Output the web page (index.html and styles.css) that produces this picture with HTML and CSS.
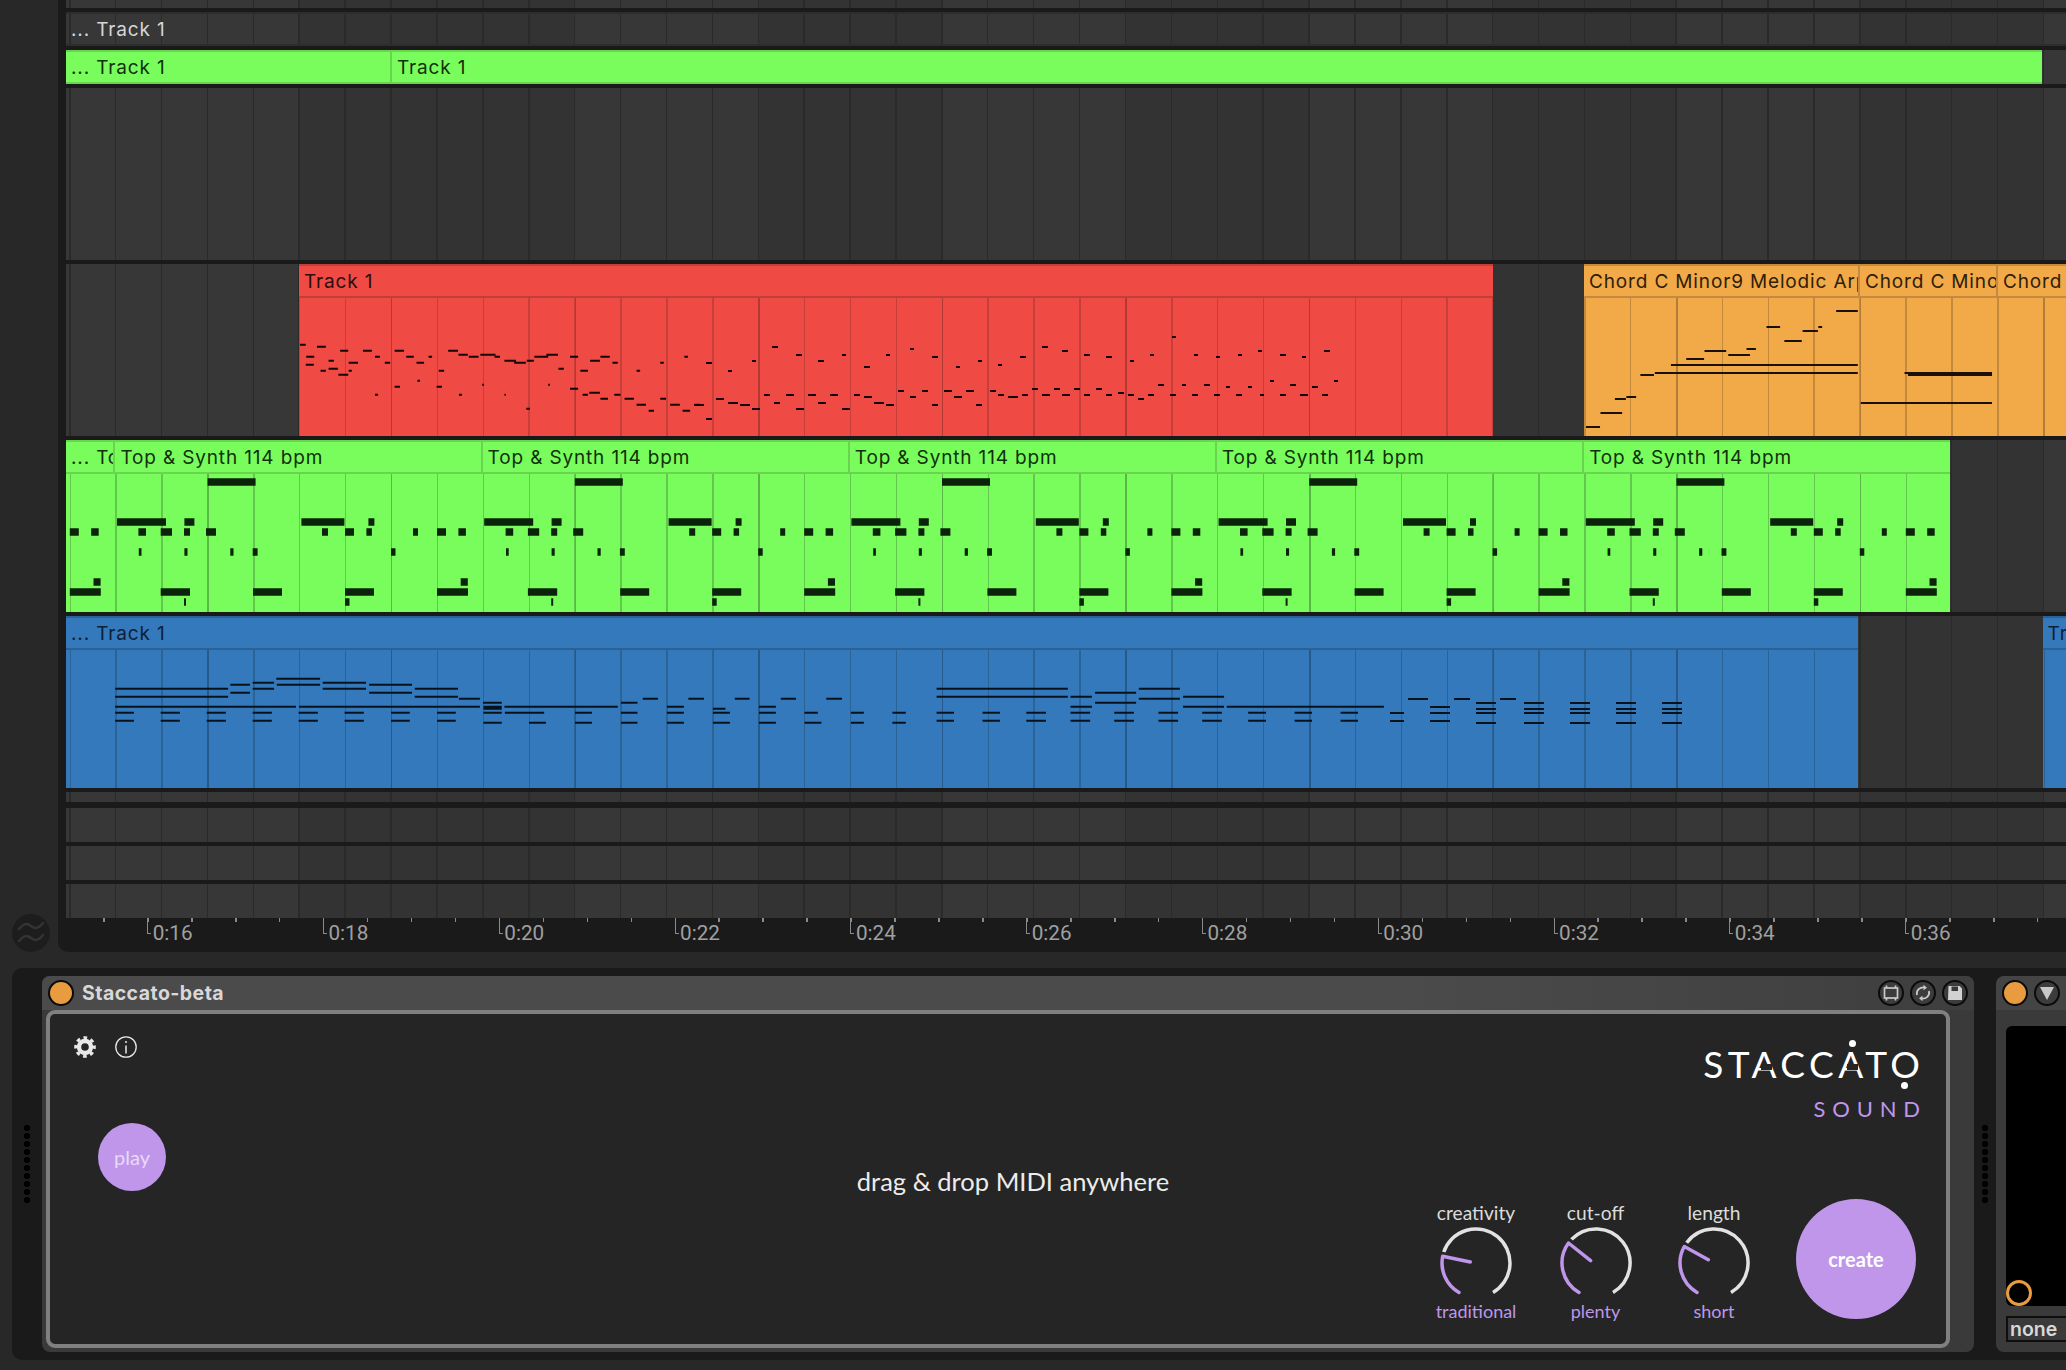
FILE: index.html
```html
<!DOCTYPE html>
<html lang="en">
<head>
<meta charset="utf-8">
<title>Staccato-beta</title>
<link rel="stylesheet" href="styles.css">
</head>
<body>
<section class="arrangement">
  <aside class="sidebar">
    <svg class="wave-btn" width="38" height="38" viewBox="0 0 38 38"><circle cx="19" cy="19" r="19" fill="#1d1d1d"/><path d="M7 15c5-6 8-6 12-3s7 3 12-3M7 27c5-6 8-6 12-3s7 3 12-3" fill="none" stroke="#343434" stroke-width="2.4" stroke-linecap="round"/></svg>
  </aside>
  <div class="timeline">
    <div class="lanes">
      <div class="lane h8"></div>
      <div class="lane h34 framed"><span class="seg ghost">... Track 1</span></div>
      <div class="lane h34">
        <div class="clip green strip w-strip">
          <div class="clip-head full"><span class="seg s325">... Track 1</span><span class="seg grow">Track 1</span></div>
        </div>
      </div>
      <div class="lane h172"></div>
      <div class="lane h172">
        <div class="clip red w-red" >
          <div class="clip-head"><span class="seg grow">Track 1</span></div>
          <div class="clip-body">
            <svg class="notes" width="1194" height="138" viewBox="299 298 1194 138" fill="none" stroke="#140606" stroke-width="2">
              <g transform="scale(.4464 .3333)"><path vector-effect="non-scaling-stroke" d="M672 1034h13M710 1040h20M762 1052h18M813 1052h20M884 1052h21M1004 1052h22M840 1070h11M910 1070h17M960 1070h8M1027 1064h21M1050 1070h22M1076 1064h34M1108 1070h12M1130 1082h26M1152 1088h26M1180 1082h16M1197 1070h31M1224 1064h26M1277 1070h18M1322 1082h22M1345 1070h21M1372 1088h12M1533 1070h8M1479 1088h8M686 1070h18M736 1082h12M781 1088h21M862 1088h12M933 1088h17M685 1094h18M718 1112h12M736 1106h21M758 1124h22M781 1112h7M983 1112h12M1251 1106h12M1300 1112h17M1426 1112h8M935 1142h6M884 1160h12M978 1160h12M1080 1154h4M1228 1154h4M1277 1166h18M840 1184h7M1028 1184h7M1130 1184h3M1305 1184h12M1320 1178h24M1345 1196h17M1376 1184h14M1179 1226h8M1399 1196h21M1426 1214h21M1453 1232h12M1479 1196h13M1501 1214h22M1529 1232h17M1556 1214h12"/></g>
              <g transform="translate(690 330) scale(.3333)"><path vector-effect="non-scaling-stroke" d="M48 99h18M246 51h18M318 75h18M456 75h12M384 93h18M186 93h12M114 123h12M522 111h18M588 75h12M660 57h12M726 81h18M864 93h12M798 111h12M924 105h12M990 81h18M1056 51h18M12 225h30M78 207h24M114 219h30M150 225h30M186 237h24M48 267h18M222 195h18M252 219h18M288 195h24M318 237h24M354 195h24M384 219h24M420 195h24M456 237h24M492 195h18M522 201h24M552 219h30M588 225h24M624 183h18M660 201h18M696 183h18M726 225h18M762 183h24M792 201h24M828 183h24M858 225h18M900 183h18M924 195h18M954 201h30M996 195h18M1026 177h18M1056 195h24"/></g>
              <g transform="translate(1040 330) scale(.3333)"><path vector-effect="non-scaling-stroke" d="M6 51h18M66 63h18M132 75h18M198 81h18M270 93h12M330 75h12M396 21h12M462 75h12M528 81h12M594 75h12M654 63h12M720 75h18M786 81h12M852 63h18M42 177h18M66 195h24M102 177h18M132 195h18M168 177h18M198 195h18M234 189h18M264 195h18M294 207h18M324 195h18M354 165h18M390 195h18M426 165h12M456 195h18M492 165h18M522 195h18M558 171h12M588 195h18M624 171h12M660 195h12M690 153h12M720 195h18M750 165h18M780 195h24M816 171h18M846 195h18M882 153h12"/></g>
            </svg>
          </div>
        </div>
        <div class="clip orange w-orange">
          <div class="clip-head"><span class="seg s275">Chord C Minor9 Melodic Arp</span><span class="seg s138">Chord C Minor9</span><span class="seg grow">Chord C Minor9</span></div>
          <div class="clip-body">
            <svg class="notes" width="482" height="138" viewBox="1584 298 482 138" fill="none" stroke="#1a1006" stroke-width="2">
              <g transform="translate(1400 240) scale(.4247 .3333)"><path vector-effect="non-scaling-stroke" d="M438 561h33M472 519h51M506 477h26M533 471h23M566 405h32M600 399h478M638 375h440M674 357h42M717 333h51M773 345h51M816 327h22M863 261h32M905 303h41M948 273h36M985 261h9M1027 213h51M1085 489h309M1188 399h206M1196 405h198"/></g>
            </svg>
          </div>
        </div>
      </div>
      <div class="lane h172">
        <div class="clip green w-synth">
          <div class="clip-head"><span class="seg s49">... Top &amp; Synth 114 bpm</span><span class="seg s367">Top &amp; Synth 114 bpm</span><span class="seg s367">Top &amp; Synth 114 bpm</span><span class="seg s367">Top &amp; Synth 114 bpm</span><span class="seg s367">Top &amp; Synth 114 bpm</span><span class="seg grow">Top &amp; Synth 114 bpm</span></div>
          <div class="clip-body">
            <svg class="notes" width="1884" height="138" viewBox="66 474 1884 138" fill="none" stroke="#0b230a" stroke-width="7.5">
              <defs><path id="synth-bar" d="M1.6 522h49M69 522h10M186 522h43M253 522h6M92.2 482h48M23 532h7.6M45.3 532h11.3M68.6 532h6M90.6 532h10M206.6 532h6M229.6 532h9M251 532h5.5M297.6 532h5M321.6 532h9M343 532h7.5M23.4 552h2.7M69 552h3.1M114.9 552h3.2M137.3 552h4.9M275.6 552h4.5M345.3 582h7.1M45.3 592h29.3M137.6 592h29M229.6 592h29M321.6 592h31M68.6 602h2M229.6 602h4.5"/></defs>
              <use href="#synth-bar" x="-251.8"/><use href="#synth-bar" x="115.4"/><use href="#synth-bar" x="482.6"/><use href="#synth-bar" x="849.8"/><use href="#synth-bar" x="1217"/><use href="#synth-bar" x="1584.2"/>
            </svg>
          </div>
        </div>
      </div>
      <div class="lane h172">
        <div class="clip blue w-blue">
          <div class="clip-head"><span class="seg grow">... Track 1</span></div>
          <div class="clip-body">
            <svg class="notes" width="1792" height="138" viewBox="66 650 1792 138" fill="none" stroke="#08121c" stroke-width="2">
              <g transform="translate(0 430) scale(.4464 .3333)"><path vector-effect="non-scaling-stroke" d="M619 746h98M566 758h48M723 758h97M516 764h44M620 764h97M827 764h96M258 776h253M566 776h48M723 776h97M929 776h97M516 788h44M827 788h96M258 800h253M929 800h97M1028 806h47M1440 806h34M1542 806h26M1082 818h42M1391 818h37M258 830h405M670 830h405M1130 830h254M1494 830h38M1083 830h41M1083 836h41M258 848h42M360 848h43M463 848h43M566 848h43M669 848h43M772 848h43M876 848h42M979 848h42M1083 848h41M1131 848h88M1288 848h38M1391 848h37M1494 848h38M258 872h42M360 872h43M463 872h43M566 872h43M669 872h43M772 872h43M876 872h42M979 872h42M1083 878h41M1185 878h38M1288 878h38M1391 878h37M1494 878h38"/></g>
              <g transform="translate(700 430) scale(.4464 .3333)"><path vector-effect="non-scaling-stroke" d="M0 806h9M78 806h33M181 806h34M283 806h35M29 836h28M132 830h38M29 848h38M132 848h38M234 848h30M338 848h29M431 848h30M29 878h38M132 878h38M234 878h38M338 878h29M431 878h30M530 776h294M983 776h92M530 800h294M830 800h48M1082 800h92M885 788h92M885 818h92M983 806h92M830 830h48M1082 830h92M1180 830h352M530 848h39M633 848h39M731 848h44M830 848h44M928 848h44M1027 848h44M1125 848h44M1228 848h40M1332 848h39M1435 848h39M530 872h39M633 872h39M731 872h44M830 872h44M928 872h44M1027 872h44M1125 872h44M1228 872h40M1332 872h39M1435 872h39"/></g>
              <g transform="translate(1390 680) scale(.3333)"><path vector-effect="non-scaling-stroke" d="M0 99h42M0 123h42M54 57h60M120 81h60M120 99h60M120 123h60M192 57h48M258 69h60M258 87h60M258 99h60M258 129h60M330 57h48M402 69h60M402 87h60M402 99h60M402 129h60M540 69h60M540 87h60M540 99h60M540 129h60M678 69h60M678 87h60M678 99h60M678 129h60M816 69h60M816 87h60M816 99h60M816 129h60"/></g>
            </svg>
          </div>
        </div>
        <div class="clip blue w-blue2">
          <div class="clip-head"><span class="seg grow">Track 1</span></div>
          <div class="clip-body"></div>
        </div>
      </div>
      <div class="lane h10 after-wide"></div>
      <div class="lane h34"></div>
      <div class="lane h34"></div>
      <div class="lane h34"></div>
    </div>
    <div class="ruler">
      <span class="time">0:16</span><span class="time">0:18</span><span class="time">0:20</span><span class="time">0:22</span><span class="time">0:24</span><span class="time">0:26</span><span class="time">0:28</span><span class="time">0:30</span><span class="time">0:32</span><span class="time">0:34</span><span class="time">0:36</span>
    </div>
  </div>
</section>

<section class="rack">
  <div class="grip"></div>
  <article class="device main-device">
    <header class="device-head">
      <span class="power"></span>
      <h1 class="device-title">Staccato-beta</h1>
      <div class="head-buttons">
        <span class="round-btn"><svg width="16" height="16" viewBox="0 0 16 16" fill="none" stroke="#c9c9c9" stroke-width="1.7"><rect x="1.5" y="3" width="13" height="10"/><path d="M3.5 .5V3M12.5 .5V3M3.5 13v2.5M12.5 13v2.5"/></svg></span>
        <span class="round-btn"><svg width="18" height="18" viewBox="0 0 18 18" fill="none" stroke="#c9c9c9" stroke-width="1.8"><path d="M3 11C2 6 6 3 10.500 3.500"/><path d="M15 7c1 5-3 8-7.500 7.500"/><path d="M9.500 .8 13 3.800 9.500 6.300zM8.500 11.700 5 14.200 8.500 17.200z" fill="#c9c9c9" stroke="none"/></svg></span>
        <span class="round-btn"><svg width="16" height="16" viewBox="0 0 16 16"><path d="M1.500 1h11l2.500 2.500V15H1z" fill="#d2d2d2"/><rect x="4.500" y="1.500" width="6.500" height="4.500" fill="#3a3a3a"/></svg></span>
      </div>
    </header>
    <div class="frame">
      <div class="col-left">
        <div class="tools">
          <svg width="22" height="22" viewBox="0 0 22 22" fill="none" stroke="#e8e8e8"><circle cx="11" cy="11" r="6" stroke-width="4.400"/><circle cx="11" cy="11" r="9.300" stroke-width="3" stroke-dasharray="3.700 3.600" stroke-dashoffset="1.800"/></svg>
          <svg width="22" height="22" viewBox="0 0 22 22" fill="none" stroke="#e8e8e8"><circle cx="11" cy="11" r="10.200" stroke-width="1.300"/><path d="M11 9.500v8" stroke-width="1.500"/><circle cx="11" cy="6" r="1" fill="#e8e8e8" stroke="none"/></svg>
        </div>
        <button class="play">play</button>
      </div>
      <div class="col-center">
        <p class="hint">drag &amp; drop MIDI anywhere</p>
      </div>
      <div class="col-right">
        <div class="logo">
          <div class="wordmark">STACCATO</div>
          <span class="a-mask first"></span><span class="a-mask second"></span>
          <div class="sound">SOUND</div>
        </div>
        <div class="controls">
          <div class="knob">
            <span class="knob-label">creativity</span>
            <svg width="76" height="76" viewBox="-38 -38 76 76" fill="none" stroke-width="3.500"><path d="M-32.200-11A34 34 0 1 1 17 29.400" stroke="#e2e2e2"/><path d="M-17 29.400A34 34 0 0 1-33.300-6.800L-5.700-1" stroke="#bf96ea" stroke-linecap="round" stroke-linejoin="round"/></svg>
            <span class="knob-value">traditional</span>
          </div>
          <div class="knob">
            <span class="knob-label">cut-off</span>
            <svg width="76" height="76" viewBox="-38 -38 76 76" fill="none" stroke-width="3.500"><path d="M-24.500-23.600A34 34 0 1 1 17 29.400" stroke="#e2e2e2"/><path d="M-17 29.400A34 34 0 0 1-27.500-20L-5.400-2.300" stroke="#bf96ea" stroke-linecap="round" stroke-linejoin="round"/></svg>
            <span class="knob-value">plenty</span>
          </div>
          <div class="knob">
            <span class="knob-label">length</span>
            <svg width="76" height="76" viewBox="-38 -38 76 76" fill="none" stroke-width="3.500"><path d="M-27.300-20.300A34 34 0 1 1 17 29.400" stroke="#e2e2e2"/><path d="M-17 29.400A34 34 0 0 1-29.700-16.500L-5.700-3.300" stroke="#bf96ea" stroke-linecap="round" stroke-linejoin="round"/></svg>
            <span class="knob-value">short</span>
          </div>
          <button class="create">create</button>
        </div>
      </div>
    </div>
  </article>
  <div class="grip grip-mid"></div>
  <article class="device side-device">
    <header class="device-head side-head">
      <span class="power thin"></span>
      <span class="round-btn"><svg width="16" height="16" viewBox="0 0 16 16"><path d="M1 2h14L8 15z" fill="#c9c9c9"/></svg></span>
    </header>
    <div class="pad"><span class="pad-ring"></span></div>
    <div class="none-box">none</div>
  </article>
</section>
</body>
</html>
```
FILE: styles.css
```css
* { box-sizing: border-box; }
html, body { margin: 0; padding: 0; }
body {
  width: 2066px;
  height: 1370px;
  overflow: hidden;
  background: #282828;
  font-family: "Inter", "Liberation Sans", sans-serif;
}

/* arrangement */
.arrangement { display: flex; height: 952px; }
.sidebar {
  width: 58px;
  flex: none;
  display: flex;
  align-items: flex-end;
  padding: 0 0 0 12px;
}
.wave-btn { display: block; }
.timeline {
  flex: 1;
  min-width: 0;
  background: #1a1a1a;
  padding-left: 8px;
  border-bottom-left-radius: 10px;
  overflow: hidden;
}
.lanes { display: flex; flex-direction: column; gap: 4px; height: 918px; }
.lane {
  display: flex;
  flex: none;
  --line: #2a2a2a;
  background:
    repeating-linear-gradient(90deg, transparent 0 3px, var(--line) 3px 4.500px, transparent 4.500px 45.900px),
    linear-gradient(90deg,
      #373737 0 233px, #333333 233px 509px, #373737 509px 693px, #333333 693px 877px,
      #373737 877px 1060px, #333333 1060px 1244px, #373737 1244px 1427px, #333333 1427px 1611px,
      #373737 1611px 1794px, #333333 1794px 1977px, #373737 1977px);
}
.h8 { height: 8px; }
.h10 { height: 10px; }
.h34 { height: 34px; }
.h172 { height: 172px; }
.after-wide { margin-bottom: 2px; }
.framed { border-top: 2px solid #2d2d2d; border-bottom: 2px solid #2d2d2d; align-items: center; }
.ghost { color: #d6d6d6; }

/* clips */
.clip { display: flex; flex-direction: column; flex: none; overflow: hidden; color: var(--ink); }
.green { background: #79fd5c; --edge: #6ad350; --ink: #11300c; --grid: #62c94d; --bar: #5ab747; }
.red { background: #ef4b44; --edge: #c23f39; --ink: #2c0d0b; --grid: #c73f3a; --bar: #b23a35; }
.orange { background: #f2a948; --edge: #c48a3d; --ink: #2e2009; --grid: #c48a3c; --bar: #b17d38; }
.blue { background: #3479bc; --edge: #2c6196; --ink: #0c2036; --grid: #2c6397; --bar: #275a8b; }

.w-strip { width: 1976px; }
.w-red { width: 1194px; margin-left: 233px; --o: 0px; --b: 92px; }
.w-orange { width: 482px; margin-left: 91px; --o: 0px; --b: 92px; }
.w-synth { width: 1884px; --o: 3.500px; --b: 141.400px; }
.w-blue { width: 1792px; --o: 3.500px; --b: 141.400px; }
.w-blue2 { width: 24px; margin-left: 184.600px; --o: .600px; --b: 100px; }

.clip-head {
  display: flex;
  flex: none;
  height: 34px;
  border-top: 2px solid var(--edge);
  border-bottom: 2px solid var(--edge);
}
.clip-head.full { height: 34px; width: 100%; }
.seg {
  display: block;
  flex: none;
  height: 30px;
  overflow: hidden;
  white-space: nowrap;
  padding: 2px 0 0 5px;
  font-size: 19px;
  letter-spacing: .85px;
  line-height: 28px;
}
.clip-head .seg { border-right: 2px solid var(--edge); }
.clip-head .seg.grow { flex: 1; border-right: 0; min-width: 0; }
.s49 { width: 49.400px; }
.s325 { width: 326px; }
.s367 { width: 367.200px; }
.s275 { width: 276px; }
.s138 { width: 138px; }

.clip-body {
  height: 138px;
  flex: none;
  background:
    repeating-linear-gradient(90deg, transparent 0 var(--b), var(--bar) var(--b) calc(var(--b) + 1.500px), transparent calc(var(--b) + 1.500px) 183.600px),
    repeating-linear-gradient(90deg, transparent 0 var(--o), var(--grid) var(--o) calc(var(--o) + 1.500px), transparent calc(var(--o) + 1.500px) 45.900px);
}
.notes { display: block; }

/* ruler */
.ruler {
  height: 34px;
  display: flex;
  padding-left: 81.200px;
  background: repeating-linear-gradient(90deg, transparent 0 37.200px, #8a8a8a 37.200px 38.700px, transparent 38.700px 43.950px) 0 0 / 100% 4px no-repeat;
}
.time {
  flex: none;
  width: 175.800px;
  position: relative;
  padding: 3px 0 0 5.500px;
  color: #a0a0a0;
  font-family: "Roboto", "Liberation Sans", sans-serif;
  font-size: 20.700px;
  line-height: 24px;
}
.time::before {
  content: "";
  position: absolute;
  left: 0;
  top: 0;
  width: 3px;
  height: 15px;
  border-left: 1.500px solid #8a8a8a;
  border-bottom: 1.500px solid #8a8a8a;
}

/* rack */
.rack {
  display: flex;
  align-items: stretch;
  height: 392px;
  margin: 16px 0 0 12px;
  padding: 8px 0 8px 12px;
  background: #1a1a1a;
  border-radius: 10px 0 0 10px;
}
.grip {
  width: 6px;
  height: 78px;
  flex: none;
  align-self: center;
  margin-right: 12px;
  background: radial-gradient(circle at 3px 3px, #000 2.900px, transparent 3.200px) 0 0 / 6px 8px repeat-y;
}
.grip-mid { margin: 0 8px; }
.device {
  background: #3a3a3a;
  border-radius: 8px;
  display: flex;
  flex-direction: column;
  flex: none;
}
.main-device { width: 1932px; }
.side-device { flex: 1; border-radius: 8px 0 0 8px; min-width: 0; overflow: hidden; }
.device-head {
  height: 34px;
  flex: none;
  display: flex;
  align-items: center;
  padding: 0 6px;
  background: linear-gradient(90deg, #4b4b4b 0, #4b4b4b 70%, #3e3e3e 100%);
  border-radius: 8px 8px 0 0;
}
.side-head { background: #444; padding-left: 6px; gap: 6px; border-radius: 8px 0 0 0; }
.power {
  width: 26px;
  height: 26px;
  flex: none;
  border-radius: 50%;
  background: #e89b3f;
  border: 2px solid #0b0b0b;
}
.device-title {
  margin: 0 0 0 8px;
  font-family: "Inter", "Liberation Sans", sans-serif;
  font-weight: 700;
  font-size: 19.500px;
  letter-spacing: .45px;
  color: #d8d8d8;
}
.head-buttons { margin-left: auto; display: flex; gap: 6px; }
.round-btn {
  width: 26px;
  height: 26px;
  flex: none;
  display: flex;
  align-items: center;
  justify-content: center;
  border-radius: 50%;
  border: 2px solid #0b0b0b;
  background: #3c3c3c;
}

/* device frame */
.frame {
  flex: 1;
  margin: 0 24px 4px 4px;
  border: 4px solid #808080;
  border-radius: 9px;
  background: #252525;
  display: flex;
  font-family: "Lato", "Liberation Sans", sans-serif;
}
.col-left { width: 300px; flex: none; padding: 22px 0 0 24px; }
.tools { display: flex; gap: 19px; height: 23px; }
.tools svg { display: block; }
button { font: inherit; border: 0; padding: 0; color: #fff; cursor: pointer; }
.play {
  display: block;
  width: 68px;
  height: 68px;
  margin: 64px 0 0 24px;
  border-radius: 50%;
  background: #c096ea;
  color: #e8daf7;
  font-size: 20px;
}
.col-center { width: 1050px; flex: none; padding: 151.500px 0 0 276px; }
.hint {
  margin: 0;
  text-align: center;
  font-size: 25.500px;
  line-height: 30px;
  color: #ececec;
}
.col-right { flex: 1; min-width: 0; display: flex; flex-direction: column; }
.logo {
  height: 185px;
  flex: none;
  position: relative;
  padding: 30px 26px 0 0;
  text-align: right;
}
.wordmark {
  font-size: 37px;
  font-weight: 400;
  line-height: 40px;
  letter-spacing: 4.500px;
  margin-right: -4.500px;
  color: #fff;
}
.wordmark::before, .wordmark::after {
  content: "";
  position: absolute;
  width: 7px;
  height: 7px;
  border-radius: 50%;
  background: #fff;
}
.wordmark::before { right: 90.500px; top: 25.500px; }
.wordmark::after { right: 38.500px; top: 67.500px; }
.a-mask {
  position: absolute;
  top: 50px;
  width: 11px;
  height: 6px;
  background: #252525;
}
.a-mask.first { right: 174.500px; }
.a-mask.second { right: 88.500px; }
.sound {
  margin-top: 12px;
  font-size: 22px;
  line-height: 26px;
  letter-spacing: 6.800px;
  margin-right: -6.800px;
  color: #bf96ea;
}
.controls { display: flex; align-items: flex-start; padding-left: 16px; }
.knob {
  width: 119px;
  flex: none;
  display: flex;
  flex-direction: column;
  align-items: center;
  margin-top: 4px;
}
.knob:nth-child(1) { width: 120px; }
.knob:nth-child(3) { width: 118px; }
.knob svg { display: block; }
.knob-label { font-size: 19.200px; line-height: 20px; margin-bottom: 2px; color: #dcdcdc; }
.knob-value { font-size: 18px; line-height: 20px; color: #bf96ea; }
.create {
  width: 120px;
  height: 120px;
  margin-left: 23px;
  flex: none;
  border-radius: 50%;
  background: #c096ea;
  font-size: 20px;
  font-weight: 700;
}

/* side device */
.pad {
  position: relative;
  height: 280px;
  flex: none;
  margin: 16px 0 0 10px;
  background: #000;
  border-radius: 6px 0 0 6px;
}
.pad-ring {
  position: absolute;
  left: 0;
  bottom: 0;
  width: 26px;
  height: 26px;
  border-radius: 50%;
  border: 3px solid #e89b3f;
}
.none-box {
  height: 26px;
  margin: 10px 0 0 10px;
  padding-left: 2px;
  background: #3a3a3a;
  border: 2px solid #0e0e0e;
  border-right: 0;
  color: #d8d8d8;
  font-family: "Inter", "Liberation Sans", sans-serif;
  font-weight: 600;
  font-size: 19.500px;
  line-height: 22px;
}
```
